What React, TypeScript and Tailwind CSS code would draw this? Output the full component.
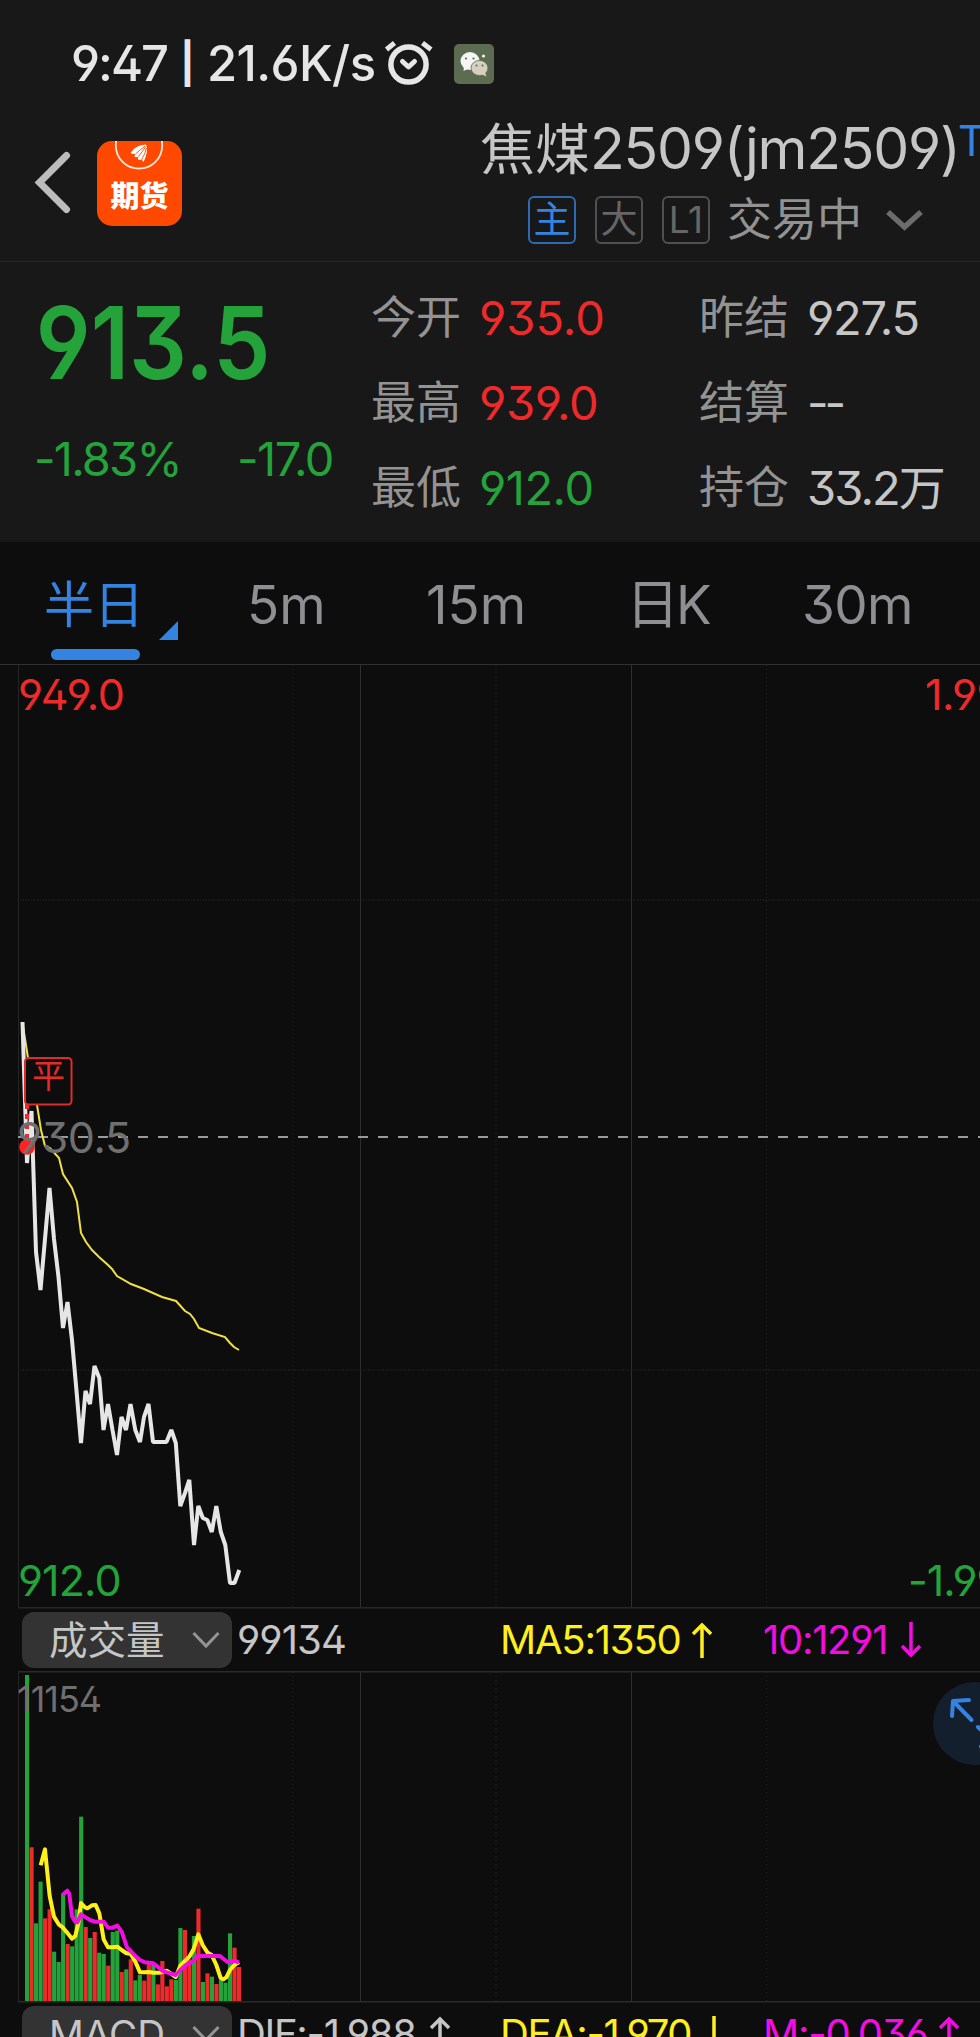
import React from "react";
import clsx from "clsx";

const RED = "#ee2a2a";
const GREEN = "#23a33a";

// bar top inside the volume panel (viewBox units), r = up, g = down
const volumeBars: [number, "r" | "g"][] = [
  [45, "g"], [562, "r"], [790, "g"], [665, "g"], [775, "r"], [748, "r"],
  [875, "g"], [906, "g"], [700, "g"], [852, "r"], [859, "g"], [748, "g"],
  [470, "g"], [801, "r"], [834, "g"], [816, "r"], [878, "g"], [882, "g"],
  [917, "r"], [816, "g"], [812, "g"], [936, "r"], [928, "g"], [898, "r"],
  [961, "g"], [945, "g"], [962, "r"], [912, "r"], [912, "g"], [973, "r"],
  [903, "r"], [979, "r"], [958, "r"], [960, "g"], [804, "g"], [810, "r"],
  [898, "r"], [828, "g"], [746, "r"], [966, "g"], [940, "r"], [950, "g"],
  [972, "r"], [960, "g"], [968, "g"], [820, "g"], [863, "r"], [921, "r"],
];

const pricePoints =
  "22.5,1022 27,1163 31.5,1111 36,1252 40.5,1290 45,1239 49.5,1188 54,1239 58.5,1277 63,1328 67.5,1302 72,1340 76.5,1391 81,1443 85.5,1391 90,1404 94.5,1366 99.3,1378 103.5,1430 108,1404 112.5,1430 117,1455 121.5,1417 126,1430 130.5,1404 135.3,1430 140,1442 144,1417 148.5,1404 153,1442 166.5,1442 171.3,1430 175.8,1443 180.3,1506 185,1493 189.3,1480 194,1545 198.3,1506 202.8,1518 207.3,1520 211.8,1532 216.3,1506 220.8,1532 225.3,1545 230,1583 234.5,1583 239.3,1570";

const averagePoints =
  "23,1026 28,1058 37,1105 41,1130 45,1146 50,1148 59,1158 63,1174 72,1188 77,1202 81,1233 86,1242 92,1250 99,1257 108,1265 112,1269 117,1276 131,1284 144,1289 153,1293 162,1297 176,1301 185,1311 190,1314 194,1319 199,1328 212,1333 225,1337 230,1343 234,1347 239,1350";

const ma5Points =
  "122,616 135,568 149,708 162,770 176,793 189,803 203,820 216,836 226,828 235,790 243,729 255,742 262,745 276,736 287,735 298,760 311,838 324,862 338,862 352,860 365,870 378,879 392,882 406,905 420,937 434,937 447,936 460,938 480,938 500,932 514,942 527,951 541,917 555,903 568,890 581,867 595,823 608,855 622,877 635,885 649,915 662,954 670,958 679,952 690,930 703,915 717,907";

const ma10Points =
  "188,704 202,692 208,702 216,768 225,785 232,787 243,763 257,772 270,780 284,785 311,785 324,803 338,803 352,797 365,815 381,862 392,873 406,888 420,900 434,907 460,910 473,920 487,932 500,937 527,945 541,930 555,917 575,907 595,887 622,888 660,888 683,907 703,902 717,908";

function StatusBar() {
  return (
    <div className="flex h-[118px] items-center pt-[10px] pl-[71px] text-[#e6e6e6]">
      <div className="flex w-[313px] items-center whitespace-nowrap text-[49px] leading-[60px] font-medium">
        <span className="w-[109px] tracking-[-2px]">9:47</span>
        <span className="w-[27px] text-[40px] leading-[60px] font-bold">|</span>
        <span className="tracking-[-0.6px]">21.6K/s</span>
      </div>
      <svg className="h-[50px] w-[50px]" viewBox="0 0 50 50" fill="none" stroke="currentColor" strokeWidth="5.5" strokeLinecap="round">
        <circle cx="24.5" cy="25.5" r="17.6" />
        <path d="M2.5 10.5 L10.5 4 M38.5 4 L47 10.5" strokeWidth="5" strokeLinecap="butt" />
        <path d="M18.5 22.5 L24.5 28 L30.5 22.5" strokeWidth="5" strokeLinejoin="round" />
      </svg>
      <svg className="ml-[20px] h-10 w-10" viewBox="0 0 40 40">
        <rect width="40" height="40" rx="5" fill="#5c6c50" />
        <ellipse cx="16" cy="17" rx="9.5" ry="9" fill="#f5f5f3" />
        <path d="M10 23 L9.500 27 L14 25 Z" fill="#f5f5f3" />
        <circle cx="12" cy="14.500" r="1.100" fill="#5c6c50" />
        <circle cx="19.500" cy="14.500" r="1.100" fill="#5c6c50" />
        <ellipse cx="25.500" cy="24" rx="8.500" ry="7.600" fill="#d6cfbf" stroke="#5c6c50" strokeWidth="0.800" />
        <path d="M28 30.500 L32.500 32.500 L31 28.500 Z" fill="#d6cfbf" />
        <circle cx="22.500" cy="21.500" r="1" fill="#5c6c50" />
        <circle cx="28.500" cy="21.500" r="1" fill="#5c6c50" />
        <circle cx="29.500" cy="12" r="1.600" fill="#f5f5f3" />
      </svg>
    </div>
  );
}

function AppLogo() {
  return (
    <div className="ml-[26px] flex h-[85px] w-[85px] flex-col items-center overflow-hidden rounded-[15px] bg-[#ff4800]">
      <svg className="h-[38px] w-[85px]" viewBox="0 0 85 38" fill="none">
        <circle cx="42" cy="4.500" r="23.200" stroke="#ffe9df" strokeWidth="1.800" />
        <path d="M33.500 12 Q38 4 49 3.500 Q52 10 46.500 21 Q45 20 45 18 Q43 19.500 41 18.500 Q40.500 17 41.500 15.500 Q38.500 17 37.500 15.500 Q37.500 13.500 39 12.500 Q36 13.500 33.500 12 Z" fill="#fff" />
        <path d="M48 5 Q43 9 39 12.500 M48.500 6 Q45 11 41.500 15.500 M49.500 7 Q48 13 45 18" stroke="#ff4800" strokeWidth="0.900" />
      </svg>
      <span className="text-[29px] leading-[36px] font-black text-white">期货</span>
    </div>
  );
}

function Tag({ label, active }: { label: string; active?: boolean }) {
  return (
    <span
      className={clsx(
        "mr-[19px] flex h-12 w-12 items-center justify-center rounded-[6px] border-2 text-[37px] leading-[44px]",
        active ? "border-[#2f69b2] text-[#3583e0]" : "border-[#505050] text-[#666]"
      )}
    >
      {label}
    </span>
  );
}

function Header() {
  return (
    <div className="flex h-[144px] border-b border-[#262626]">
      <div className="flex h-[130px] w-[480px] items-center pl-[33px]">
        <svg className="h-[64px] w-[38px]" viewBox="0 0 38 64" fill="none" stroke="#bcbcbc" strokeWidth="7" strokeLinecap="round">
          <path d="M33.500 4.500 L6.500 31.500 L33.500 58.500" />
        </svg>
        <AppLogo />
      </div>
      <div className="w-[500px]">
        <div className="flex h-[62px] items-center whitespace-nowrap text-[#c6c6c6]">
          <span className="w-[112px] text-[55px] leading-[62px]">焦煤</span>
          <span className="w-[368px] text-[57px] leading-[62px] tracking-[-1.2px]">2509(jm2509)</span>
          <span className="mb-4 text-[42px] leading-[46px] text-[#3583e0]">T</span>
        </div>
        <div className="mt-[16px] flex h-12 items-center pl-[48px]">
          <Tag label="主" active />
          <Tag label="大" />
          <Tag label="L1" />
          <span className="-ml-[2px] w-[158px] text-[45px] leading-[48px] text-[#929292]">交易中</span>
          <svg className="h-[24px] w-[40px]" viewBox="0 0 40 24" fill="none" stroke="#6c6c6c" strokeWidth="5.500">
            <path d="M3 4 L19.500 19 L36 4" />
          </svg>
        </div>
      </div>
    </div>
  );
}

const stats = [
  { label: "今开", value: "935.0", color: "text-[#ee2a2a]" },
  { label: "昨结", value: "927.5", color: "text-[#c6c6c6] tracking-[-1.3px]" },
  { label: "最高", value: "939.0", color: "text-[#ee2a2a] tracking-[-0.4px]" },
  { label: "结算", value: "--", color: "text-[#c6c6c6] tracking-[-4px]" },
  { label: "最低", value: "912.0", color: "text-[#23a33a] tracking-[-0.5px]" },
  { label: "持仓", value: "33.2万", color: "text-[#c6c6c6] tracking-[-1.9px]" },
];

function Quote() {
  return (
    <div className="flex h-[280px] whitespace-nowrap">
      <div className="w-[371px] pt-[20px] pl-[34px] text-[#23a33a]">
        <div className="origin-left scale-x-90 pl-[2px] text-[101px] leading-[120px] font-semibold">913.5</div>
        <div className="mt-[27px] flex text-[47px] leading-[60px]">
          <span className="w-[203px] tracking-[-1.8px]">-1.83%</span>
          <span className="tracking-[-1.5px]">-17.0</span>
        </div>
      </div>
      <div className="grid flex-1 auto-rows-[85px] grid-cols-[328px_1fr] pt-[13px]">
        {stats.map((s) => (
          <div key={s.label} className="flex items-center leading-[60px]">
            <span className="w-[108px] text-[45px] text-[#939393]">{s.label}</span>
            <span className={clsx("text-[47px]", s.color)}>{s.value}</span>
          </div>
        ))}
      </div>
    </div>
  );
}

function Tabs() {
  return (
    <div className="flex h-[123px] border-b border-[#303030] text-[53px] leading-[126px] whitespace-nowrap text-[#8e8e93]">
      <div className="relative w-[247px] pl-[44px] text-[50px] text-[#3583e0]">
        半日
        <span className="absolute top-[107px] left-[51px] h-[11px] w-[89px] rounded-full bg-[#3583e0]" />
        <svg className="absolute top-[79px] left-[159px] h-[19px] w-[19px]" viewBox="0 0 19 19">
          <path d="M0 19 L19 0 V19 Z" fill="#3583e0" />
        </svg>
      </div>
      <span className="w-[179px]">5m</span>
      <span className="w-[200px]">15m</span>
      <span className="w-[176px] tracking-[-3px]">日K</span>
      <span className="tracking-[-0.6px]">30m</span>
    </div>
  );
}

function GridLines({ top, bottom }: { top: number; bottom: number }) {
  return (
    <g stroke="#2e2e2e" fill="none">
      <path d={`M18.500 ${top} V${bottom}`} stroke="#242424" />
      <path d={`M360.500 ${top} V${bottom} M631.500 ${top} V${bottom}`} />
      <path d={`M293 ${top} V${bottom} M496 ${top} V${bottom} M766.500 ${top} V${bottom}`} stroke="#242424" strokeDasharray="1 3" />
    </g>
  );
}

function PriceChart() {
  return (
    <div className="relative h-[944px] overflow-hidden text-[43px] leading-[50px] tracking-[-0.4px] whitespace-nowrap">
      <svg className="block h-[944px] w-[980px]" viewBox="0 665 980 944" fill="none">
        <GridLines top={665} bottom={1607} />
        <path d="M18 900 H980 M18 1370 H980" stroke="#232323" strokeWidth="1.500" strokeDasharray="1 1.500" />
        <path d="M18 1607.750 H980" stroke="#262626" strokeWidth="1.500" />
        <path d="M18 1137 H980" stroke="#9a9a9a" strokeWidth="2" strokeDasharray="10 10" />
        <polyline points={averagePoints} stroke="#f0e048" strokeWidth="2" />
        <polyline points={pricePoints} stroke="#e6e6e6" strokeWidth="4" strokeLinejoin="bevel" />
        <path d="M27 1104 V1142" stroke={RED} strokeWidth="4" strokeDasharray="5 5" />
        <circle cx="27" cy="1147" r="7.800" fill="#ff2222" />
        <rect x="25" y="1058" width="46.500" height="46.500" rx="3.500" fill="#0d0d0d" stroke="#dc2c2c" strokeWidth="2" />
      </svg>
      <span className="absolute top-[393px] left-[32px] text-[33px] leading-[36px] text-[#e42a2a]">平</span>
      <span className="absolute top-[4px] left-[18px] text-[#ee2a2a]">949.0</span>
      <span className="absolute top-[4px] left-[925px] text-[#ee2a2a]">1.99%</span>
      <span className="absolute top-[447px] left-[17px] text-[#6f6f6f]">930.5</span>
      <span className="absolute top-[890px] left-[18px] tracking-[-0.9px] text-[#23a33a]">912.0</span>
      <span className="absolute top-[890px] left-[908px] tracking-[-1px] text-[#23a33a]">-1.99%</span>
    </div>
  );
}

function Arrow({ down }: { down?: boolean }) {
  return (
    <svg className={clsx("h-[36px] w-[20px]", down && "rotate-180")} viewBox="0 0 20 36" fill="none" stroke="currentColor" strokeWidth="3.500">
      <path d="M10 36 V3" />
      <path d="M1 12 L10 3 L19 12" />
    </svg>
  );
}

interface IndicatorProps {
  name: string;
  values: { text: string; arrow?: "up" | "down"; className: string; textClass: string }[];
}

function IndicatorRow({ name, values }: IndicatorProps) {
  return (
    <div className="flex h-[62px] shrink-0 items-center pl-[22px] text-[40px] leading-[48px] whitespace-nowrap">
      <div className="flex h-[56px] w-[210px] items-center rounded-[12px] bg-[#333] pl-[27px] text-[38.5px] text-[#c6c6c6]">
        <span className="w-[143px]">{name}</span>
        <svg className="h-[18px] w-[28px]" viewBox="0 0 28 18" fill="none" stroke="#949494" strokeWidth="3">
          <path d="M1.500 2 L14 15 L26.500 2" />
        </svg>
      </div>
      {values.map((v) => (
        <div key={v.text} className={clsx("flex items-center", v.className)}>
          <span className={v.textClass}>{v.text}</span>
          {v.arrow && <Arrow down={v.arrow === "down"} />}
        </div>
      ))}
    </div>
  );
}

function VolumeChart() {
  return (
    <div className="relative h-[332px] overflow-hidden">
      <svg className="block h-[332px] w-[980px]" viewBox="0 1671 980 332" fill="none">
        <GridLines top={1672} bottom={2001} />
        <path d="M18 1671.750 H980 M18 2001.750 H980" stroke="#2a2a2a" strokeWidth="1.500" />
        <g transform="translate(0 1660) scale(0.33333)">
          {volumeBars.map(([top, dir], i) => (
            <rect
              key={i}
              x={75 + i * 13.53}
              y={top}
              width="12.400"
              height={1023 - top}
              fill={dir === "r" ? RED : GREEN}
            />
          ))}
          <polyline points={ma5Points} stroke="#fff01a" strokeWidth="12" strokeLinejoin="round" />
          <polyline points={ma10Points} stroke="#f20de0" strokeWidth="12" strokeLinejoin="round" />
        </g>
      </svg>
      <span className="absolute top-[8px] left-[17px] text-[36px] leading-[40px] tracking-[-1px] text-[#6f6f6f]">11154</span>
      <svg className="absolute top-[11px] left-[933px] h-[83px] w-[83px]" viewBox="0 0 83 83" fill="none" stroke="#3583e0" strokeWidth="4" strokeLinecap="round" strokeLinejoin="round">
        <circle cx="41.500" cy="41.500" r="41.500" fill="#131f2d" stroke="none" />
        <path d="M36 18 L20 19 L19 34 M20.500 19.500 L38.500 38" />
        <path d="M45 45 L63 63 M64 48 L63 63.500 L48 64.500" />
      </svg>
    </div>
  );
}

export default function App() {
  return (
    <div className="h-[2037px] w-[980px] overflow-hidden bg-[#0d0d0d] font-['Inter','Noto_Sans_CJK_SC',sans-serif] [font-feature-settings:'cv03','cv04','cv09','ss01']">
      <div className="bg-[#181818]">
        <StatusBar />
        <Header />
        <Quote />
      </div>
      <Tabs />
      <PriceChart />
      <IndicatorRow
        name="成交量"
        values={[
          { text: "99134", className: "w-[268px] pl-[5px] text-[#c6c6c6]", textClass: "tracking-[-0.9px]" },
          { text: "MA5:1350", arrow: "up", className: "w-[263px] text-[#ffef20]", textClass: "w-[192px] tracking-[-1.2px]" },
          { text: "10:1291", arrow: "down", className: "text-[#f20de0]", textClass: "w-[138px] tracking-[-1.3px]" },
        ]}
      />
      <VolumeChart />
      <IndicatorRow
        name="MACD"
        values={[
          { text: "DIF:-1.988", arrow: "up", className: "w-[268px] pl-[5px] text-[#c6c6c6]", textClass: "w-[193px] tracking-[-1.3px]" },
          { text: "DEA:-1.970", arrow: "down", className: "w-[263px] text-[#ffef20]", textClass: "w-[204px] tracking-[-1.4px]" },
          { text: "M:-0.036", arrow: "up", className: "text-[#f20de0]", textClass: "w-[176px] tracking-[-1.2px]" },
        ]}
      />
    </div>
  );
}
